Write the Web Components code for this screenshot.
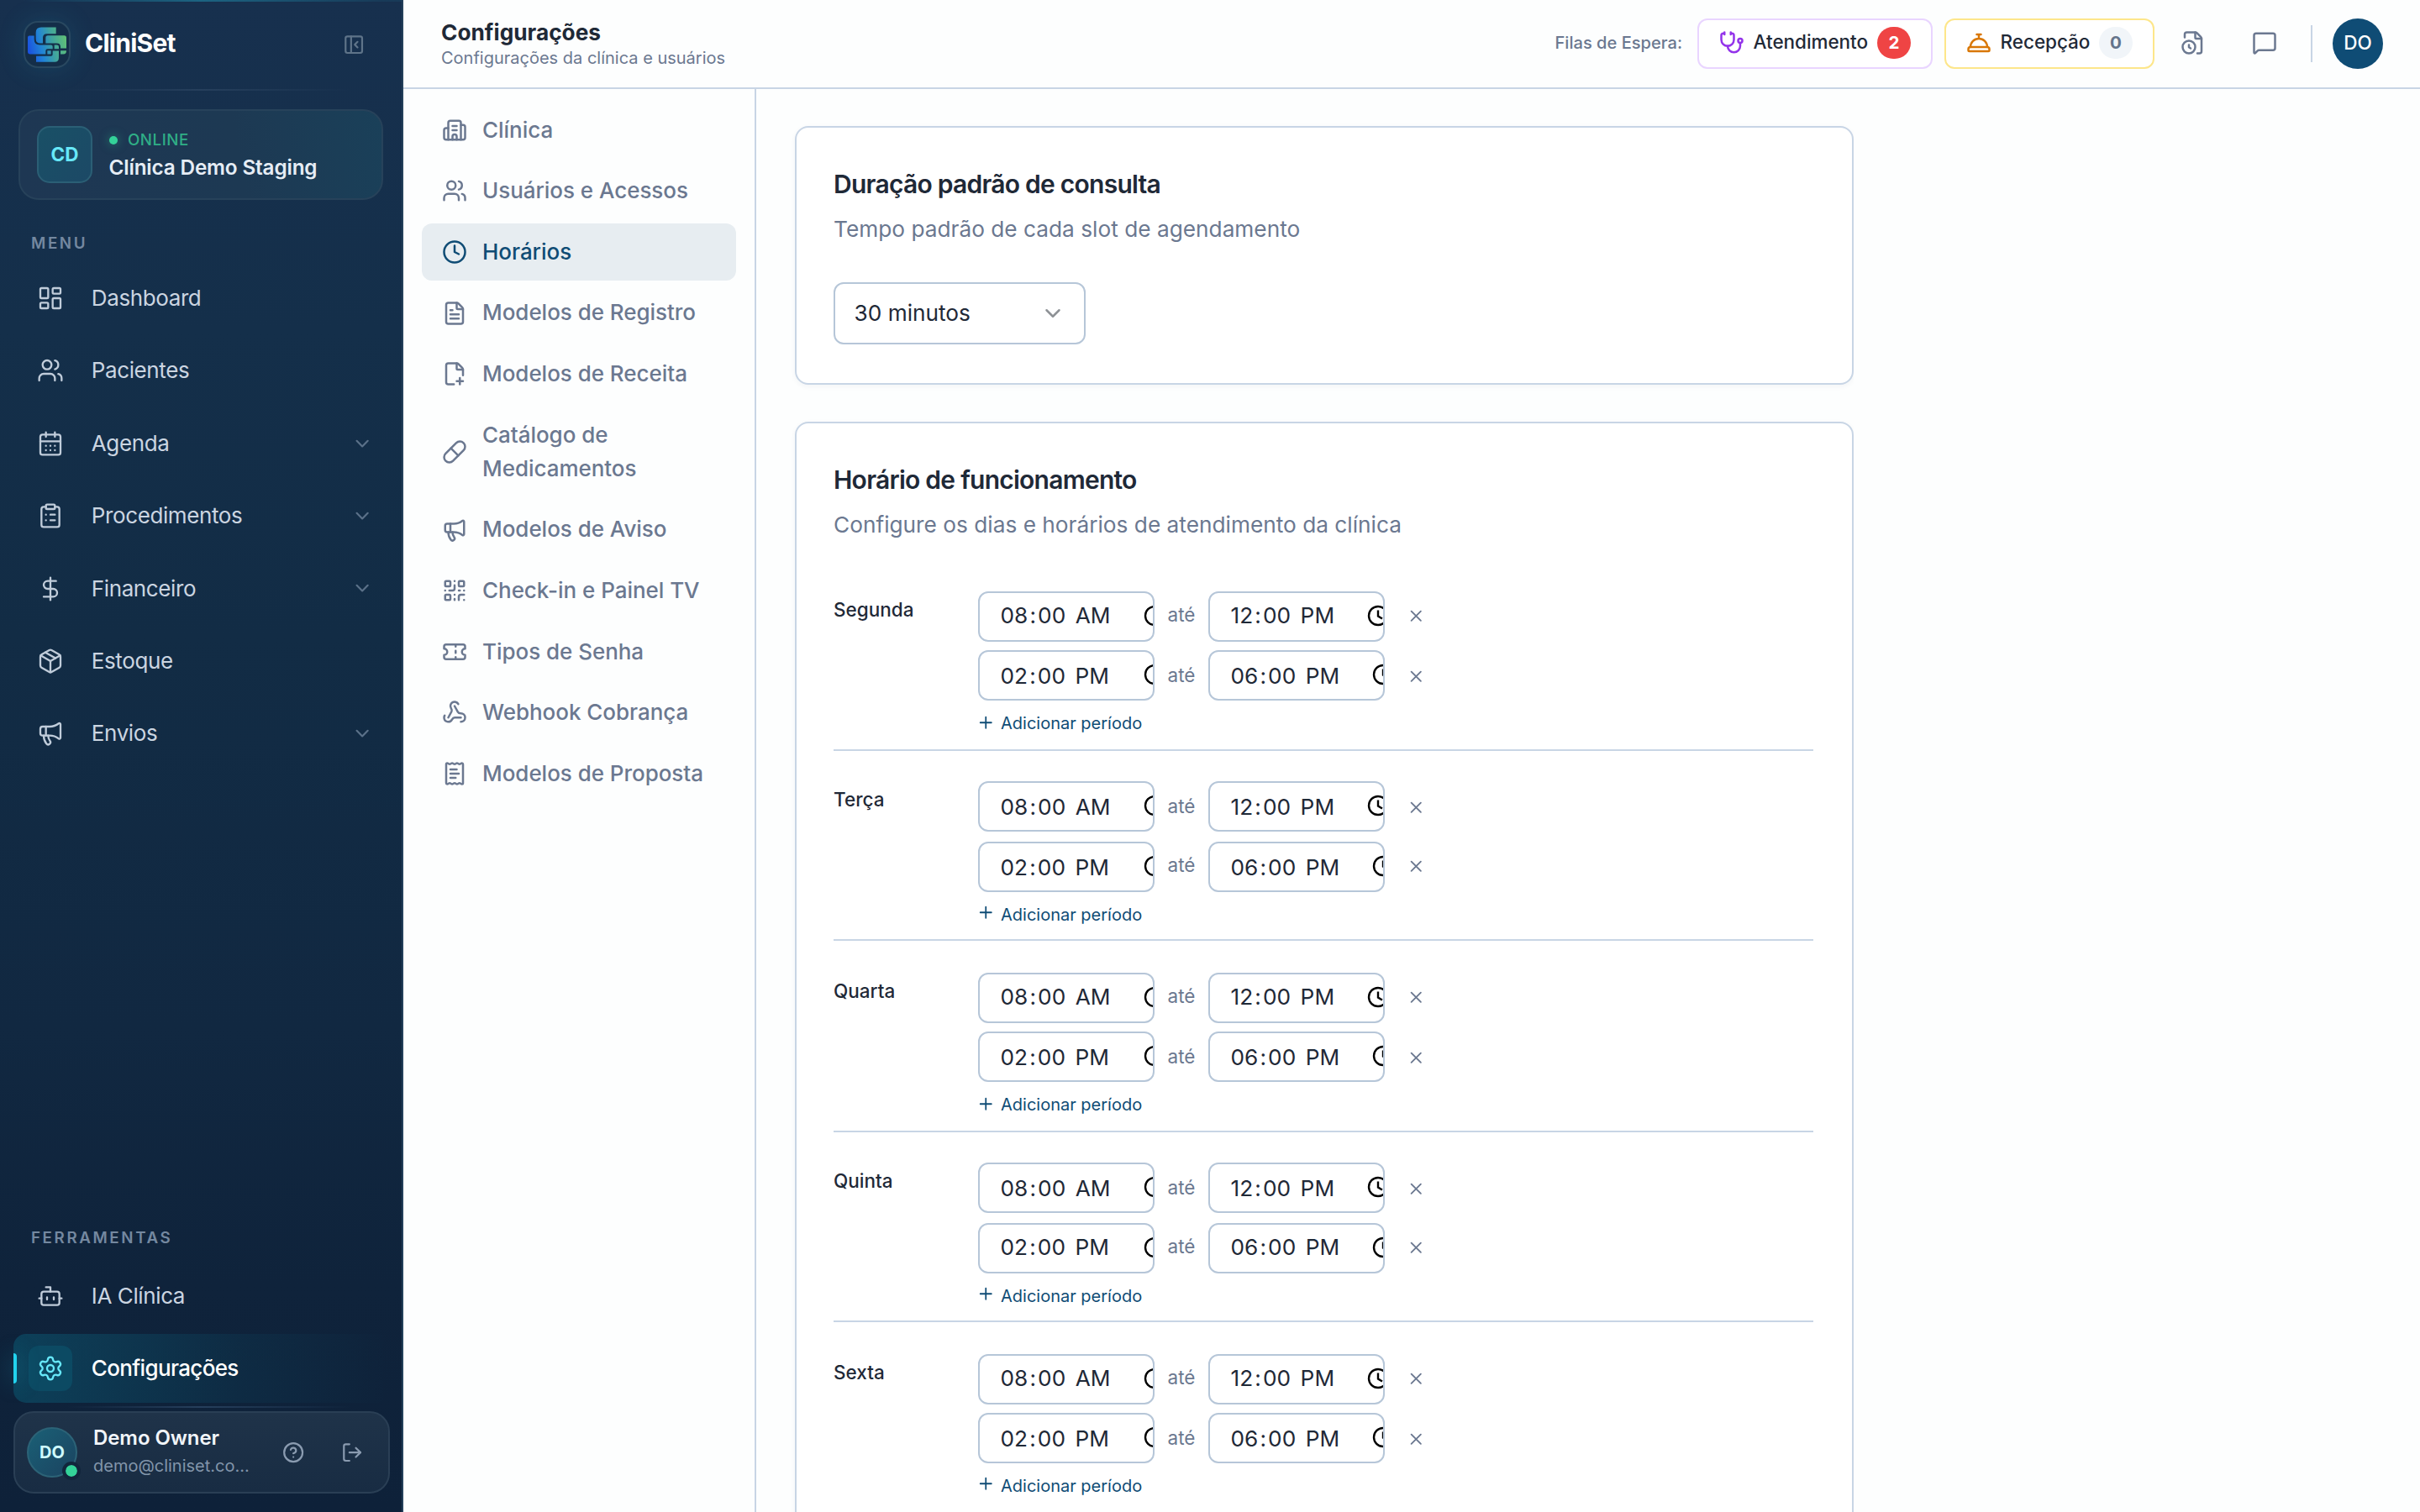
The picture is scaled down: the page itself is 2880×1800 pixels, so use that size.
<!DOCTYPE html>
<html lang="pt-BR">
<head>
<meta charset="utf-8">
<title>CliniSet - Configurações</title>
<style>
html,body{margin:0;padding:0}
body{width:2880px;height:1800px;overflow:hidden;background:#fdfefe;font-family:Inter,"Liberation Sans",sans-serif;color:#1f2937}
</style>
</head>
<body>
<clini-app></clini-app>
<script>
const ICONS={
dash:'<rect width="7" height="9" x="3" y="3" rx="1"/><rect width="7" height="5" x="14" y="3" rx="1"/><rect width="7" height="9" x="14" y="12" rx="1"/><rect width="7" height="5" x="3" y="16" rx="1"/>',
users:'<path d="M16 21v-2a4 4 0 0 0-4-4H6a4 4 0 0 0-4 4v2"/><circle cx="9" cy="7" r="4"/><path d="M22 21v-2a4 4 0 0 0-3-3.87"/><path d="M16 3.13a4 4 0 0 1 0 7.75"/>',
calendar:'<path d="M8 2v4M16 2v4"/><rect width="18" height="18" x="3" y="4" rx="2"/><path d="M3 10h18M8 14h.01M12 14h.01M16 14h.01M8 18h.01M12 18h.01M16 18h.01"/>',
clipboard:'<rect width="8" height="4" x="8" y="2" rx="1"/><path d="M16 4h2a2 2 0 0 1 2 2v14a2 2 0 0 1-2 2H6a2 2 0 0 1-2-2V6a2 2 0 0 1 2-2h2"/><path d="M12 11h4M12 16h4M8 11h.01M8 16h.01"/>',
dollar:'<path d="M12 2v20"/><path d="M17 5H9.5a3.5 3.5 0 0 0 0 7h5a3.5 3.5 0 0 1 0 7H6"/>',
box:'<path d="M11 21.73a2 2 0 0 0 2 0l7-4A2 2 0 0 0 21 16V8a2 2 0 0 0-1-1.73l-7-4a2 2 0 0 0-2 0l-7 4A2 2 0 0 0 3 8v8a2 2 0 0 0 1 1.73z"/><path d="M12 22V12"/><path d="M3.29 7 12 12l8.71-5"/><path d="m7.5 4.27 9 5.15"/>',
megaphone:'<path d="M11 6a13 13 0 0 0 8.4-2.8A1 1 0 0 1 21 4v12a1 1 0 0 1-1.6.8A13 13 0 0 0 11 14H5a2 2 0 0 1-2-2V8a2 2 0 0 1 2-2z"/><path d="M6 14a12 12 0 0 0 2.4 7.2 2 2 0 0 0 3.2-2.4A8 8 0 0 1 10 14"/><path d="M8 6v8"/>',
bot:'<path d="M12 8V4H8"/><rect width="16" height="12" x="4" y="8" rx="2"/><path d="M2 14h2M20 14h2M15 13v2M9 13v2"/>',
gear:'<path d="M9.671 4.136a2.34 2.34 0 0 1 4.659 0 2.34 2.34 0 0 0 3.319 1.915 2.34 2.34 0 0 1 2.33 4.033 2.34 2.34 0 0 0 0 3.831 2.34 2.34 0 0 1-2.33 4.033 2.34 2.34 0 0 0-3.319 1.915 2.34 2.34 0 0 1-4.659 0 2.34 2.34 0 0 0-3.32-1.915 2.34 2.34 0 0 1-2.33-4.033 2.34 2.34 0 0 0 0-3.831A2.34 2.34 0 0 1 6.35 6.051a2.34 2.34 0 0 0 3.319-1.915"/><circle cx="12" cy="12" r="3"/>',
help:'<circle cx="12" cy="12" r="10"/><path d="M9.09 9a3 3 0 0 1 5.83 1c0 2-3 3-3 3"/><path d="M12 17h.01"/>',
logout:'<path d="m16 17 5-5-5-5"/><path d="M21 12H9"/><path d="M9 21H5a2 2 0 0 1-2-2V5a2 2 0 0 1 2-2h4"/>',
panel:'<rect width="18" height="18" x="3" y="3" rx="2"/><path d="M9 3v18"/><path d="m16 15-3-3 3-3"/>',
building:'<path d="M10 12h4M10 8h4M14 21v-3a2 2 0 0 0-4 0v3"/><path d="M6 10H4a2 2 0 0 0-2 2v7a2 2 0 0 0 2 2h16a2 2 0 0 0 2-2V9a2 2 0 0 0-2-2h-2"/><path d="M6 21V5a2 2 0 0 1 2-2h8a2 2 0 0 1 2 2v16"/>',
clock:'<circle cx="12" cy="12" r="10"/><path d="M12 6v6l4 2"/>',
file:'<path d="M6 22a2 2 0 0 1-2-2V4a2 2 0 0 1 2-2h8a2.4 2.4 0 0 1 1.704.706l3.588 3.588A2.4 2.4 0 0 1 20 8v12a2 2 0 0 1-2 2z"/><path d="M14 2v5a1 1 0 0 0 1 1h5M10 9H8M16 13H8M16 17H8"/>',
fileplus:'<path d="M11.35 22H6a2 2 0 0 1-2-2V4a2 2 0 0 1 2-2h8a2.4 2.4 0 0 1 1.706.706l3.588 3.588A2.4 2.4 0 0 1 20 8v5.35"/><path d="M14 2v5a1 1 0 0 0 1 1h5M14 19h6M17 16v6"/>',
pill:'<path d="m10.5 20.5 10-10a4.95 4.95 0 1 0-7-7l-10 10a4.95 4.95 0 1 0 7 7Z"/><path d="m8.5 8.5 7 7"/>',
qr:'<rect width="5" height="5" x="3" y="3" rx="1"/><rect width="5" height="5" x="16" y="3" rx="1"/><rect width="5" height="5" x="3" y="16" rx="1"/><path d="M21 16h-3a2 2 0 0 0-2 2v3M21 21v.01M12 7v3a2 2 0 0 1-2 2H7M3 12h.01M12 3h.01M12 16v.01M16 12h1M21 12v.01M12 21v-1"/>',
ticket:'<path d="M2 9a3 3 0 0 1 0 6v2a2 2 0 0 0 2 2h16a2 2 0 0 0 2-2v-2a3 3 0 0 1 0-6V7a2 2 0 0 0-2-2H4a2 2 0 0 0-2 2Z"/><path d="M13 5v2M13 17v2M13 11v2"/>',
webhook:'<path d="M18 16.98h-5.99c-1.1 0-1.95.94-2.48 1.9A4 4 0 0 1 2 17c.01-.7.2-1.4.57-2"/><path d="m6 17 3.13-5.78c.53-.97.1-2.18-.5-3.1a4 4 0 1 1 6.89-4.06"/><path d="m12 6 3.13 5.73C15.66 12.7 16.9 13 18 13a4 4 0 0 1 0 8"/>',
receipt:'<path d="M13 16H8M14 8H8M16 12H8"/><path d="M4 3a1 1 0 0 1 1-1 1.3 1.3 0 0 1 .7.2l.933.6a1.3 1.3 0 0 0 1.4 0l.934-.6a1.3 1.3 0 0 1 1.4 0l.933.6a1.3 1.3 0 0 0 1.4 0l.933-.6a1.3 1.3 0 0 1 1.4 0l.934.6a1.3 1.3 0 0 0 1.4 0l.933-.6A1.3 1.3 0 0 1 19 2a1 1 0 0 1 1 1v18a1 1 0 0 1-1 1 1.3 1.3 0 0 1-.7-.2l-.933-.6a1.3 1.3 0 0 0-1.4 0l-.934.6a1.3 1.3 0 0 1-1.4 0l-.933-.6a1.3 1.3 0 0 0-1.4 0l-.933.6a1.3 1.3 0 0 1-1.4 0l-.934-.6a1.3 1.3 0 0 0-1.4 0l-.933.6a1.3 1.3 0 0 1-.7.2 1 1 0 0 1-1-1z"/>',
stethoscope:'<path d="M11 2v2M5 2v2M5 3H4a2 2 0 0 0-2 2v4a6 6 0 0 0 12 0V5a2 2 0 0 0-2-2h-1"/><path d="M8 15a6 6 0 0 0 12 0v-3"/><circle cx="20" cy="10" r="2"/>',
bell:'<path d="M3 20a1 1 0 0 1-1-1v-1a2 2 0 0 1 2-2h16a2 2 0 0 1 2 2v1a1 1 0 0 1-1 1Z"/><path d="M20 16a8 8 0 1 0-16 0M12 4v4M10 4h4"/>',
fileclock:'<path d="M16 22h2a2 2 0 0 0 2-2V8a2.4 2.4 0 0 0-.706-1.706l-3.588-3.588A2.4 2.4 0 0 0 14 2H6a2 2 0 0 0-2 2v2.85"/><path d="M14 2v5a1 1 0 0 0 1 1h5M8 14v2.2l1.6 1"/><circle cx="8" cy="16" r="6"/>',
message:'<path d="M22 17a2 2 0 0 1-2 2H6.828a2 2 0 0 0-1.414.586l-2.202 2.202A.71.71 0 0 1 2 21.286V5a2 2 0 0 1 2-2h16a2 2 0 0 1 2 2z"/>',
chevron:'<path d="m6 9 6 6 6-6"/>',
x:'<path d="M18 6 6 18M6 6l12 12"/>',
plus:'<path d="M5 12h14M12 5v14"/>'
};
function define(name,render){
  customElements.define(name,class extends HTMLElement{
    connectedCallback(){
      if(this.shadowRoot)return;
      this.attachShadow({mode:'open'}).innerHTML=render(k=>this.getAttribute(k),this);
    }
  });
}
define('ui-icon',a=>`<style>:host{display:block;flex:none;width:${a('size')}px;height:${a('size')}px}svg{display:block;width:100%;height:100%}</style>
<svg viewBox="0 0 24 24" fill="none" stroke="currentColor" stroke-width="${a('stroke')||2}" stroke-linecap="round" stroke-linejoin="round">${ICONS[a('name')]}</svg>`);

define('brand-logo',()=>`<style>:host{display:flex;align-items:center;justify-content:center;box-sizing:border-box;width:56px;height:56px;border:2px solid #294860;border-radius:17px;background:#142e49;box-shadow:0 0 32px rgba(34,170,200,.16)}svg{display:block;width:46px;height:42px}</style>
<svg viewBox="99 92 138 125"><defs><linearGradient id="g" gradientUnits="userSpaceOnUse" x1="100" y1="180" x2="237" y2="150"><stop offset="0" stop-color="#1a4fe0"/><stop offset=".35" stop-color="#2184d6"/><stop offset=".65" stop-color="#3fa3a0"/><stop offset="1" stop-color="#5fbf78"/></linearGradient></defs>
<g fill="url(#g)"><path d="M200 93H147Q128 93 128 112V134Q128 150 144 150H153V130Q153 116 167 116H200Z"/>
<path d="M99 129Q99 123 105 123H122V136Q122 156 142 156H182Q188 156 188 162V170H170Q163 170 163 177V189H108Q99 189 99 180Z"/>
<path d="M163 130Q163 122 171 122H229Q237 122 237 130V168H216V163Q216 150 203 150H163Z"/>
<path d="M129 196H182Q188 196 188 190V177H210V202Q210 217 195 217H129Z"/>
<path d="M194 156H203Q210 156 210 163V170H194ZM169 176H182V189H169ZM216 176H237Q237 189 226 189H216Z"/></g></svg>`);

define('nav-item',(a,el)=>{const on=el.hasAttribute('active');return `<style>
:host{display:flex;position:relative;align-items:center;box-sizing:border-box;height:82px;padding-left:18px;padding-right:20px;border-radius:15px;color:${on?'#fff':'#cbd5e1'};${on?'background:linear-gradient(90deg,rgba(6,182,212,.2),rgba(6,182,212,.06) 60%,rgba(6,182,212,0))':''}}
i{position:absolute;left:0;top:23px;width:4px;height:36px;border-radius:0 4px 4px 0;background:#22d3ee;box-shadow:0 0 24px rgba(34,211,238,.5)}
.ic{display:flex;align-items:center;justify-content:center;width:52px;height:54px;border-radius:12px;${on?'background:#0c4a63;color:#67e8f9':'color:#c0ccda'}}
b{flex:1;margin-left:22.8px;font-weight:${on?500:400};font-size:26px;line-height:40px;letter-spacing:${on?-.65:-.39}px}
.ch{color:#5b7189}</style>${on?'<i></i>':''}<div class="ic"><ui-icon name="${a('icon')}" size="32" stroke="1.75"></ui-icon></div><b>${a('label')}</b>${el.hasAttribute('chev')?'<ui-icon class="ch" name="chevron" size="26.25"></ui-icon>':''}`});

define('side-bar',()=>`<style>
:host{display:flex;flex-direction:column;box-sizing:border-box;width:480px;height:1800px;flex:none;border-right:2px solid #24405a;background:linear-gradient(180deg,#17304e 0,#142f4a 22%,#122c45 42%,#112841 68%,#0f233b 85%,#0e2139 100%)}
.top{height:2px;flex:none;background:linear-gradient(90deg,rgba(28,100,130,0) 5%,#1c6482 50%,rgba(28,100,130,.2) 95%)}
.brand{display:flex;align-items:center;height:104px;flex:none;box-sizing:border-box;padding:0 44px 2px 28px;color:#fff}
.brand span{flex:1;margin-left:17px;padding-bottom:4px;font-weight:700;font-size:30px;line-height:40px;letter-spacing:-.75px}
.brand ui-icon{color:#5f7489}
.hr{height:2px;flex:none;margin:0 40px;background:linear-gradient(90deg,rgba(60,90,120,0) 10%,#263f5c 50%,rgba(60,90,120,0) 95%)}
.clinic{display:flex;align-items:center;box-sizing:border-box;height:108px;flex:none;margin:22px 22px 0;padding:0 20px;border:2px solid #27425a;border-radius:24px;background:linear-gradient(80deg,#1e3753,#1d3953 60%,#1a4059)}
.cd{display:flex;align-items:center;justify-content:center;box-sizing:border-box;width:66px;height:68px;padding-bottom:1px;border:2px solid #2b5f75;border-radius:15px;background:linear-gradient(135deg,#195066,#1c4966);color:#67e8f9;font-weight:700;font-size:22.5px}
.info{display:flex;flex-direction:column;margin:2px 0 0 19.5px}
.on{display:flex;align-items:center;color:#2fae86;font-size:18.75px;line-height:28px;font-weight:500;letter-spacing:.5px}
.on i{width:10px;height:10px;border-radius:50%;background:#34d399;margin-right:12.5px;box-shadow:0 0 12px rgba(52,211,153,.5)}
.nm{font-size:24.3px;font-weight:600;line-height:36px;letter-spacing:-.16px;color:#e6edf5}
.cap{font-weight:600;font-size:18.75px;line-height:28px;letter-spacing:2.6px;color:#7488a0;padding-left:37px;flex:none}
nav{display:flex;flex-direction:column;gap:4.4px;margin:0 14px 0 16px}
.grow{flex:1}
.user{display:flex;align-items:center;box-sizing:border-box;height:98px;flex:none;margin:4px 14px 22px 16px;padding:0 14px;border:2px solid #2a3f55;border-radius:24px;background:linear-gradient(180deg,#1f3349,#182c43)}
.av{position:relative;display:flex;align-items:center;justify-content:center;box-sizing:border-box;width:60px;height:60px;border-radius:50%;border:2px solid #2c6377;background:linear-gradient(135deg,#1a6076,#1b4360);color:#cffafe;font-weight:700;font-size:20px}
.av i{position:absolute;right:-6px;bottom:-5px;width:14px;height:14px;border:4px solid #12263c;border-radius:50%;background:#34d399;background-clip:padding-box}
.who{display:flex;flex-direction:column;width:205px;margin:-2px 0 0 19px}
.who b{font-weight:600;font-size:24px;line-height:34px;letter-spacing:-.08px;color:#f1f5f9}
.who span{font-size:20px;line-height:32px;color:#8295aa}
.act{display:flex;gap:44px;margin-left:20px;color:#8a9bb0}
</style>
<div class="top"></div>
<div class="brand"><brand-logo></brand-logo><span>CliniSet</span><ui-icon name="panel" size="26.25"></ui-icon></div>
<div class="hr"></div>
<div class="clinic"><div class="cd">CD</div><div class="info"><div class="on"><i></i><span>ONLINE</span></div><div class="nm">Clínica Demo Staging</div></div></div>
<div class="cap" style="margin-top:38px;margin-bottom:10px">MENU</div>
<nav>
<nav-item icon="dash" label="Dashboard"></nav-item>
<nav-item icon="users" label="Pacientes"></nav-item>
<nav-item icon="calendar" label="Agenda" chev></nav-item>
<nav-item icon="clipboard" label="Procedimentos" chev></nav-item>
<nav-item icon="dollar" label="Financeiro" chev></nav-item>
<nav-item icon="box" label="Estoque"></nav-item>
<nav-item icon="megaphone" label="Envios" chev></nav-item>
</nav>
<div class="grow"></div>
<div class="cap" style="margin-bottom:13.6px">FERRAMENTAS</div>
<nav><nav-item icon="bot" label="IA Clínica"></nav-item><nav-item icon="gear" label="Configurações" active></nav-item></nav>
<div class="hr" style="margin-top:4px"></div>
<div class="user"><div class="av">DO<i></i></div><div class="who"><b>Demo Owner</b><span>demo@cliniset.co...</span></div><div class="act"><ui-icon name="help" size="26.25"></ui-icon><ui-icon name="logout" size="26.25"></ui-icon></div></div>`);

define('queue-button',a=>`<style>
:host{display:flex;align-items:center;box-sizing:border-box;width:${a('w')}px;height:60px;padding:0 24px 2px;border:2px solid ${a('line')};border-radius:12px;background:#fff}
ui-icon{color:${a('tone')}}
b{flex:1;margin-left:10.6px;padding-bottom:2px;font-weight:500;font-size:22.5px;line-height:34px;letter-spacing:-.05px;color:#1f2937}
em{font-style:normal;display:flex;align-items:center;justify-content:center;box-sizing:border-box;width:40px;height:38px;padding-bottom:1px;border-radius:19px;background:${a('bg')};color:${a('fg')};font-weight:700;font-size:20.6px}
</style><ui-icon name="${a('icon')}" size="30"></ui-icon><b>${a('label')}</b><em>${a('count')}</em>`);

define('page-header',()=>`<style>
:host{display:flex;align-items:center;box-sizing:border-box;height:106px;border-bottom:2px solid #c8d5e5;padding:0 44px 0 45px;flex:none}
.t{flex:1;display:flex;flex-direction:column}
.t b{font-weight:700;font-size:26.25px;line-height:33px;padding-top:1px}
.t span{font-size:20px;line-height:28px;color:#6b7890}
.q{font-weight:500;font-size:20.1px;color:#6b7890;margin-right:18px;padding-bottom:3px}
queue-button{margin-right:14px}
.g{color:#6b7890;margin:-2px 55px 0 0}
.v{width:2px;height:44px;background:#c8d5e5;margin-right:24px}
.a{display:flex;align-items:center;justify-content:center;box-sizing:border-box;width:60px;height:60px;padding-bottom:4px;border-radius:50%;background:#0f4c75;color:#fff;font-weight:500;font-size:22.5px}
</style>
<div class="t"><b>Configurações</b><span>Configurações da clínica e usuários</span></div>
<span class="q">Filas de Espera:</span>
<queue-button icon="stethoscope" label="Atendimento" count="2" w="280" line="#e9d5ff" tone="#9333ea" bg="#ef4444" fg="#fff"></queue-button>
<queue-button icon="bell" label="Recepção" count="0" w="250" line="#fde68a" tone="#d97706" bg="#f1f5f9" fg="#64748b" style="margin-right:31px"></queue-button>
<ui-icon class="g" name="fileclock" size="30"></ui-icon>
<ui-icon class="g" name="message" size="30" style="margin-right:40px"></ui-icon>
<div class="v"></div><div class="a">DO</div>`);

define('settings-link',(a,el)=>`<style>
:host{display:flex;align-items:center;box-sizing:border-box;padding:13.85px 24px;border-radius:12px;color:#6b7890;${el.hasAttribute('active')?'background:#e7edf1;color:#0f4c75':''}}
b{margin-left:18px;font-weight:500;font-size:26px;line-height:40.3px;letter-spacing:-.04px}
</style><ui-icon name="${a('icon')}" size="30"></ui-icon><b><slot></slot></b>`);

define('settings-nav',()=>`<style>
:host{display:flex;flex-direction:column;gap:4.6px;box-sizing:border-box;width:420px;flex:none;border-right:2px solid #c8d5e5;padding:14.8px 22px 0}
</style>
<settings-link icon="building">Clínica</settings-link>
<settings-link icon="users">Usuários e Acessos</settings-link>
<settings-link icon="clock" active>Horários</settings-link>
<settings-link icon="file">Modelos de Registro</settings-link>
<settings-link icon="fileplus">Modelos de Receita</settings-link>
<settings-link icon="pill">Catálogo de<br>Medicamentos</settings-link>
<settings-link icon="megaphone">Modelos de Aviso</settings-link>
<settings-link icon="qr">Check-in e Painel TV</settings-link>
<settings-link icon="ticket">Tipos de Senha</settings-link>
<settings-link icon="webhook">Webhook Cobrança</settings-link>
<settings-link icon="receipt">Modelos de Proposta</settings-link>`);

define('settings-card',a=>`<style>
:host{display:flex;flex-direction:column;box-sizing:border-box;width:1260px;height:${a('h')}px;flex:none;padding:47px 46px 0 44px;border:2px solid #c8d5e5;border-radius:16px;background:#fff;box-shadow:0 2px 6px rgba(30,60,100,.05)}
h2{margin:0;font-weight:600;font-size:30px;line-height:40px;letter-spacing:-.75px;color:#1f2937}
p{margin:14px 0 0;font-size:26.25px;line-height:40px;color:#6b7890}
</style><h2>${a('title')}</h2><p>${a('desc')}</p><slot></slot>`);

define('select-field',()=>`<style>
:host{display:flex;align-items:center;justify-content:space-between;box-sizing:border-box;width:300px;height:74px;margin-top:43px;padding:0 22px 0 22.5px;border:2px solid #b6c6d8;border-radius:12px;font-size:26.25px;line-height:40px}
ui-icon{color:#8e9296}</style><span><slot></slot></span><ui-icon name="chevron" size="30"></ui-icon>`);

define('time-field',a=>{const [h,m,p]=a('value').split(/[: ]/);return `<style>
:host{display:flex;box-sizing:border-box;width:210px;height:60px;flex:none;border:2px solid #b6c6d8;border-radius:12px;overflow:hidden;padding-left:22.5px;font-size:26.25px;line-height:40px;letter-spacing:.05px;color:#1f2937}
div{flex:none;width:${a('iw')}px;white-space:pre;margin-top:${a('dy')}px}
span{padding:0 2px}
svg{flex:none;width:26px;height:26px;margin-top:14px}
</style><div><span>${h}</span>:<span>${m}</span> <span>${p}</span></div><svg viewBox="0 0 26 26" fill="none" stroke="#000" stroke-width="2.4"><circle cx="13" cy="13" r="11"/><path d="M13 6.5v7l5 3"/></svg>`});

/* Rows are laid out on a half-resolution grid, every edge snapped to a whole unit. */
const snap=v=>2*Math.round(v);
define('day-hours',a=>{
  const k=+a('index'),o=113.45*k,top=k?snap(446+o-113.45)+2:668;
  const y=[snap(351.7+o),snap(387.3+o)],t=[snap(371.45+o),snap(407.05+o)],d=[snap(370.2+o),snap(405.8+o)];
  const lab=snap(366.9+o),add=snap(434.2+o),plus=snap(430.6+o),line=snap(446+o);
  const row=(i,f,g,w,v,mt)=>`<div class="row" style="margin-top:${mt}px"><time-field value="${f}" iw="${w}" dy="${t[i]-y[i]-31}"></time-field><span class="ate" style="margin-top:${d[i]-y[i]-25}px">até</span><time-field value="${g}" iw="${v}" dy="${t[i]-y[i]-31}"></time-field><ui-icon name="x" size="22.5" stroke="2" style="margin-top:${d[i]-y[i]-18}px"></ui-icon></div>`;
  return `<style>
:host{display:flex;box-sizing:border-box;height:${line+2-top}px;flex:none;border-bottom:2px solid #c8d5e5;color:#6b7890}
.lab{width:172px;flex:none;font-weight:500;font-size:22.5px;line-height:34px;color:#1f2937;margin-top:${lab-top-25}px}
.rows{display:flex;flex-direction:column}
.row{display:flex;height:60px}
.ate{font-size:22.5px;line-height:34px;width:64px;text-align:center}
.row ui-icon{margin-left:26px}
.add{display:flex;color:#0f4c75;font-size:20px;line-height:30px;font-weight:400}
.add ui-icon{margin:${plus-2-y[1]-60-11}px 6.5px 0 -2px}
.add span{margin-top:${add-y[1]-60-22}px}
</style><div class="lab">${a('day')}</div><div class="rows">
${row(0,'08:00 AM','12:00 PM',172.5,164.5,y[0]-top)}${row(1,'02:00 PM','06:00 PM',172.5,170,y[1]-y[0]-60)}
<div class="add"><ui-icon name="plus" size="22.5" stroke="1.9"></ui-icon><span>Adicionar período</span></div></div>`});

define('clini-app',()=>`<style>
:host{display:flex;width:2880px;height:1800px;overflow:hidden}
.r{display:flex;flex-direction:column;flex:1;min-width:0}
.b{display:flex;flex:1;min-height:0}
main{display:flex;flex-direction:column;gap:44px;padding:44px 0 0 46px;min-height:0;overflow:hidden}
</style><side-bar></side-bar><div class="r"><page-header></page-header><div class="b"><settings-nav></settings-nav>
<main><settings-card h="308" title="Duração padrão de consulta" desc="Tempo padrão de cada slot de agendamento"><select-field>30 minutos</select-field></settings-card>
<settings-card h="1500" title="Horário de funcionamento" desc="Configure os dias e horários de atendimento da clínica"><div style="height:23px;flex:none"></div>
<day-hours index="0" day="Segunda"></day-hours><day-hours index="1" day="Terça"></day-hours><day-hours index="2" day="Quarta"></day-hours><day-hours index="3" day="Quinta"></day-hours><day-hours index="4" day="Sexta"></day-hours></settings-card></main></div></div>`);
</script>
</body>
</html>
